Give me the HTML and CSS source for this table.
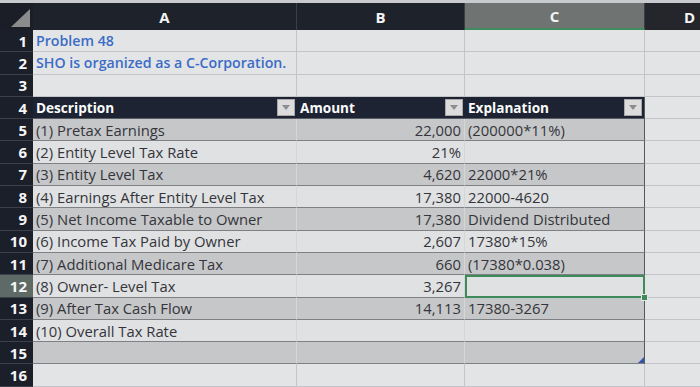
FILE: index.html
```html
<!DOCTYPE html>
<html>
<head>
<meta charset="utf-8">
<link rel="stylesheet" href="styles.css">
</head>
<body>
<div class="sheet">
  <div class="topstrip"></div>
  <div class="row colhead">
    <div class="corner"><svg width="33" height="27" viewBox="0 0 33 27"><polygon points="30,6 30,24 11,24" fill="#8c8c8c"/></svg></div>
    <div class="ch">A</div>
    <div class="ch">B</div>
    <div class="ch ch-sel">C</div>
    <div class="ch ch-d">D</div>
  </div>

  <div class="row plain"><div class="rn">1</div><div class="c a title">Problem 48</div><div class="c"></div><div class="c"></div><div class="c"></div></div>
  <div class="row plain"><div class="rn">2</div><div class="c a title">SHO is organized as a C-Corporation.</div><div class="c"></div><div class="c"></div><div class="c"></div></div>
  <div class="row plain"><div class="rn">3</div><div class="c"></div><div class="c"></div><div class="c"></div><div class="c"></div></div>

  <div class="row thead">
    <div class="rn">4</div>
    <div class="c th"><span>Description</span><span class="fbtn"></span></div>
    <div class="c th"><span>Amount</span><span class="fbtn"></span></div>
    <div class="c th thc"><span>Explanation</span><span class="fbtn"></span></div>
    <div class="c d"></div>
  </div>

  <div class="row band dark"><div class="rn">5</div><div class="c a">(1) Pretax Earnings</div><div class="c b">22,000</div><div class="c e">(200000*11%)</div><div class="c d"></div></div>
  <div class="row band light"><div class="rn">6</div><div class="c a">(2) Entity Level Tax Rate</div><div class="c b">21%</div><div class="c e"></div><div class="c d"></div></div>
  <div class="row band dark"><div class="rn">7</div><div class="c a">(3) Entity Level Tax</div><div class="c b">4,620</div><div class="c e">22000*21%</div><div class="c d"></div></div>
  <div class="row band light"><div class="rn">8</div><div class="c a">(4) Earnings After Entity Level Tax</div><div class="c b">17,380</div><div class="c e">22000-4620</div><div class="c d"></div></div>
  <div class="row band dark"><div class="rn">9</div><div class="c a">(5) Net Income Taxable to Owner</div><div class="c b">17,380</div><div class="c e">Dividend Distributed</div><div class="c d"></div></div>
  <div class="row band light"><div class="rn">10</div><div class="c a">(6) Income Tax Paid by Owner</div><div class="c b">2,607</div><div class="c e">17380*15%</div><div class="c d"></div></div>
  <div class="row band dark"><div class="rn">11</div><div class="c a">(7) Additional Medicare Tax</div><div class="c b">660</div><div class="c e">(17380*0.038)</div><div class="c d"></div></div>
  <div class="row band light"><div class="rn rn-sel">12</div><div class="c a">(8) Owner- Level Tax</div><div class="c b">3,267</div><div class="c e selcell"><span class="handle"></span></div><div class="c d"></div></div>
  <div class="row band dark"><div class="rn">13</div><div class="c a">(9) After Tax Cash Flow</div><div class="c b">14,113</div><div class="c e">17380-3267</div><div class="c d"></div></div>
  <div class="row band light"><div class="rn">14</div><div class="c a">(10) Overall Tax Rate</div><div class="c b"></div><div class="c e"></div><div class="c d"></div></div>
  <div class="row band dark"><div class="rn">15</div><div class="c a"></div><div class="c b"></div><div class="c e lastc"><span class="resize"></span></div><div class="c d"></div></div>
  <div class="row plain"><div class="rn">16</div><div class="c"></div><div class="c"></div><div class="c"></div><div class="c"></div></div>
</div>
</body>
</html>
```
FILE: styles.css
```css
* { box-sizing: border-box; }
html, body { margin: 0; padding: 0; }
body {
  width: 700px;
  height: 387px;
  overflow: hidden;
  background: #e3e4e6;
  font-family: "Open Sans", "Liberation Sans", sans-serif;
  font-size: 14.8px;
  color: #34353a;
}
.sheet {
  display: flex;
  flex-direction: column;
  width: 700px;
  height: 387px;
  overflow: hidden;
}
.topstrip {
  height: 3px;
  background: #c9cacd;
  flex: none;
}
.row {
  display: grid;
  grid-template-columns: 33px 264px 168px 180px 90px;
  height: 22.3px;
  flex: none;
}
.colhead {
  height: 27px;
  background: #1e222b;
}
.corner { background: #1b1e26; }
.corner svg { display: block; }
.ch {
  display: flex;
  align-items: center;
  justify-content: center;
  color: #f4f4f4;
  font-weight: 700;
  font-size: 15px;
  border-right: 1px solid #3a3e47;
}
.ch-sel {
  background: #6f7472;
  border-bottom: 2px solid #3e8c5d;
}
.ch-d { background: #24262b; }

.rn {
  background: #1b1f29;
  color: #f6f6f6;
  font-weight: 700;
  font-size: 15px;
  display: flex;
  align-items: center;
  justify-content: flex-end;
  padding-right: 6px;
  border-bottom: 1px solid #3b404a;
}
.rn-sel { background: #5e6a65; }

.c {
  display: flex;
  align-items: center;
  white-space: nowrap;
  overflow: hidden;
  border-right: 1px solid #c3c4c7;
  border-bottom: 1px solid #c3c4c7;
}
.a { padding-left: 3px; }
.b { justify-content: flex-end; padding-right: 3px; }
.e { padding-left: 3px; }
.title {
  color: #3b6cc6;
  font-weight: 600;
  font-size: 14.2px;
}

.thead .th {
  background: #1d2333;
  color: #fbfbfb;
  font-weight: 700;
  font-size: 13.6px;
  justify-content: space-between;
  padding-left: 3px;
  padding-right: 2px;
  border-right: none;
  border-bottom: 1px solid #5a5e66;
}
.thead .thc { border-right: 1px solid #55585e; }
.fbtn {
  width: 18px;
  height: 17px;
  background: #dcdcdd;
  border: 1px solid #a8a8aa;
  position: relative;
  flex: none;
}
.fbtn::after {
  content: "";
  position: absolute;
  left: 4px;
  top: 5px;
  border-left: 4.5px solid transparent;
  border-right: 4.5px solid transparent;
  border-top: 5px solid #8c8d90;
}

.band .a, .band .b, .band .e {
  border-bottom: 1px solid #7f8084;
}
.band .a, .band .b { border-right: 1px solid #d6d6d6; }
.band .e { border-right: 1px solid #55585e; }
.dark .a, .dark .b, .dark .e { background: #c6c7c9; }
.light .a, .light .b, .light .e { background: #e0e1e3; }
.d { background: #e3e4e6; }

.band .selcell {
  position: relative;
  overflow: visible;
  border: 2px solid #3f8a5a;
}
.handle {
  position: absolute;
  right: -5px;
  bottom: -5px;
  width: 7px;
  height: 7px;
  background: #3f8a5a;
  border: 1px solid #e3e4e6;
  z-index: 2;
}
.lastc { position: relative; }
.resize {
  position: absolute;
  right: 0;
  bottom: 0;
  width: 0;
  height: 0;
  border-left: 6px solid transparent;
  border-bottom: 6px solid #3556a8;
}
```
